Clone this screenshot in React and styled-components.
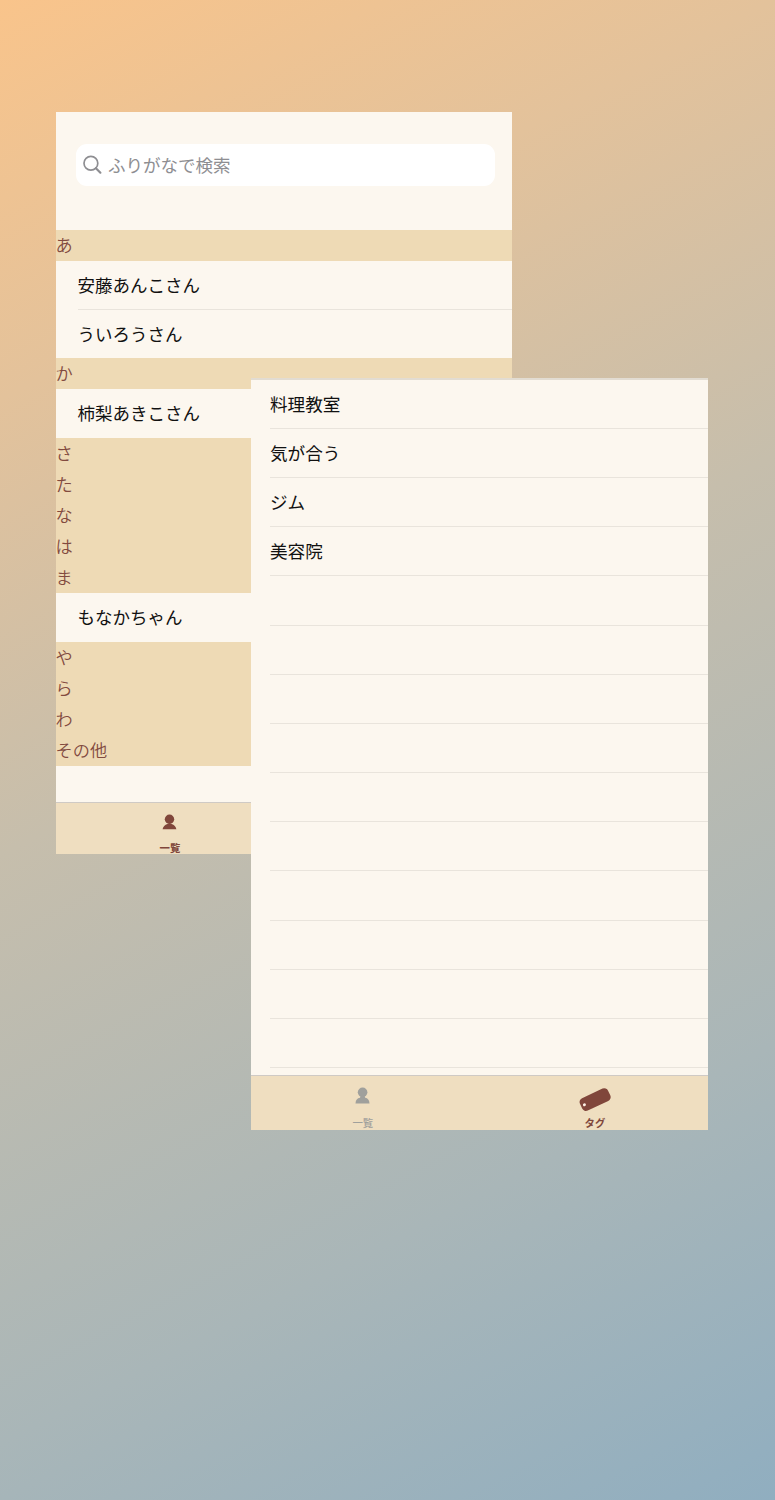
import React from "react";
import styled, { createGlobalStyle } from "styled-components";

const GlobalStyle = createGlobalStyle`
  *, *::before, *::after { box-sizing: border-box; }
  body {
    margin: 0;
    font-family: "Noto Sans CJK JP", sans-serif;
  }
`;

const Canvas = styled.main`
  position: relative;
  width: 775px;
  height: 1500px;
  overflow: hidden;
  background: linear-gradient(152.7deg, #f9c48b 0%, #e3c29b 21%, #c6beac 45%, #a9b6b8 76%, #90aec0 100%);
`;

const Phone = styled.section`
  position: absolute;
  left: ${(p) => p.$x}px;
  top: ${(p) => p.$y}px;
  width: ${(p) => p.$w}px;
  height: ${(p) => p.$h}px;
  display: flex;
  flex-direction: column;
  overflow: hidden;
  background: #fcf7ef;
`;

const SearchArea = styled.header`
  flex: none;
  height: 118px;
  padding: 32px 16.6px 0 19.5px;
`;

const SearchField = styled.div`
  display: flex;
  align-items: center;
  gap: 6px;
  height: 41.5px;
  padding-left: 7.6px;
  border-radius: 11px;
  background: #fff;
  color: #8e8e92;
  font-size: 17.5px;
  line-height: 26px;
  white-space: nowrap;
`;

const SectionHeader = styled.h2`
  flex: none;
  margin: 0 0 0 -0.4px;
  height: ${(p) => p.$h || 31}px;
  line-height: 30px;
  background: #eedab5;
  color: #824a3f;
  font-size: 17.2px;
  font-weight: 350;
  white-space: nowrap;
`;

const Row = styled.div`
  flex: none;
  height: ${(p) => p.$h || 49}px;
  margin-left: ${(p) => p.$inset}px;
  padding-bottom: ${(p) => p.$lift || 0}px;
  display: flex;
  align-items: center;
  border-bottom: 1px solid ${(p) => (p.$line ? "#e9e4dc" : "transparent")};
  color: #111;
  font-size: ${(p) => p.$size || 17.5}px;
  line-height: 26px;
  white-space: nowrap;
`;

const TagList = styled.div`
  flex: 1;
  min-height: 0;
  border-top: 2px solid #e2dcd2;
`;

const TabBar = styled.nav`
  flex: none;
  display: grid;
  grid-template-columns: 1fr 1fr;
  margin-top: auto;
  height: ${(p) => p.$h}px;
  border-top: 1px solid #cfcac5;
  background: #efdec0;
`;

const Tab = styled.div`
  display: flex;
  flex-direction: column;
  align-items: center;
  padding-top: 10px;
  padding-right: ${(p) => p.$shift || 0}px;
  padding-left: ${(p) => p.$push || 0}px;
  color: ${(p) => (p.$active ? "#80463b" : "#a0a09c")};
`;

const IconSlot = styled.div`
  flex: none;
  height: ${(p) => p.$h}px;
  svg { display: block; }
`;

const TabLabel = styled.span`
  font-size: 10.4px;
  line-height: 15px;
  font-weight: ${(p) => (p.$bold ? 700 : 500)};
  white-space: nowrap;
`;

const SearchIcon = () => (
  <svg width="19" height="20" viewBox="0 0 19 20" fill="none" stroke="currentColor" strokeLinecap="round">
    <circle cx="7.9" cy="8.2" r="6.9" strokeWidth="1.7" />
    <path d="M12.9 13.2L17.4 17.7" strokeWidth="2.2" />
  </svg>
);

const PersonIcon = () => (
  <svg width="15" height="17" viewBox="0 0 15 17" fill="currentColor">
    <circle cx="7.5" cy="6.3" r="4.7" />
    <path d="M0.6 16.2C1 13.6 2.8 11.7 5.4 10.9L7.5 10.2L9.6 10.9C12.2 11.7 14 13.6 14.4 16.2Z" />
  </svg>
);

const InactivePersonIcon = () => (
  <svg width="15" height="18" viewBox="0 0 15 18" fill="currentColor">
    <circle cx="7.6" cy="6.3" r="4.8" />
    <path d="M0.5 17.4C0.7 14 2.2 12.2 5 11.8L5.6 10H9.6L10.2 11.8C12.8 12.2 14.3 14 14.5 17.4Z" />
  </svg>
);

const TagIcon = () => (
  <svg width="34" height="26" viewBox="0 0 34 26">
    <g transform="rotate(-25 17 13.5)">
      <rect x="1.6" y="6.8" width="31" height="13.6" rx="4.2" fill="currentColor" />
      <circle cx="5.2" cy="13.8" r="1.5" fill="#fbefe5" />
    </g>
  </svg>
);

const sections = [
  ["あ", ["安藤あんこさん", "ういろうさん"]],
  ["か", ["柿梨あきこさん"]],
  ["さ", []],
  ["た", []],
  ["な", []],
  ["は", []],
  ["ま", ["もなかちゃん"]],
  ["や", []],
  ["ら", []],
  ["わ", []],
  ["その他", []],
];

const tags = ["料理教室", "気が合う", "ジム", "美容院", ...Array(10).fill("")];

export default function App() {
  return (
    <>
      <GlobalStyle />
      <Canvas>
        <Phone $x={56} $y={112} $w={455.6} $h={742.4}>
          <SearchArea>
            <SearchField>
              <SearchIcon />
              ふりがなで検索
            </SearchField>
          </SearchArea>
          {sections.map(([title, people]) => (
            <React.Fragment key={title}>
              <SectionHeader $h={title === "か" ? 30.6 : 31}>{title}</SectionHeader>
              {people.map((name, i) => (
                <Row
                  key={name}
                  $inset={21.5}
                  $h={people.length > 1 ? 48.7 : 49}
                  $line={i < people.length - 1}
                >
                  {name}
                </Row>
              ))}
            </React.Fragment>
          ))}
          <TabBar $h={52.4}>
            <Tab $active>
              <IconSlot $h={27}><PersonIcon /></IconSlot>
              <TabLabel $bold>一覧</TabLabel>
            </Tab>
          </TabBar>
        </Phone>
        <Phone $x={251} $y={377.8} $w={457.3} $h={752.5}>
          <TagList>
            {tags.map((tag, i) => (
              <Row key={i} $inset={19} $h={49.16} $lift={0.5} $size={17.6} $line>
                {tag}
              </Row>
            ))}
          </TagList>
          <TabBar $h={55.3}>
            <Tab $shift={5}>
              <IconSlot $h={29}><InactivePersonIcon /></IconSlot>
              <TabLabel>一覧</TabLabel>
            </Tab>
            <Tab $active $push={2}>
              <IconSlot $h={29}><TagIcon /></IconSlot>
              <TabLabel $bold>タグ</TabLabel>
            </Tab>
          </TabBar>
        </Phone>
      </Canvas>
    </>
  );
}
